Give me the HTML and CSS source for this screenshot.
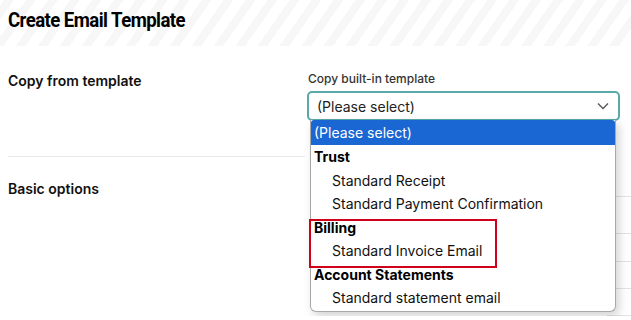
FILE: index.html
```html
<!DOCTYPE html>
<html lang="en">
<head>
	<meta charset="UTF-8">
	<title>Create Email Template</title>
	<link rel="stylesheet" href="styles.css">
</head>
<body>

<div class="page-head">
	<h1>Create Email Template</h1>
</div>

<div class="section">
	<div class="section-title">Copy from template</div>
	<div class="section-body">
		<label class="field-label" for="builtin">Copy built-in template</label>
		<div class="select-wrap">
			<div class="select" id="builtin">
				<span>(Please select)</span>
				<svg class="chev" width="12" height="8" viewBox="0 0 12 8"><path d="M1 1.5 L6 6.5 L11 1.5" fill="none" stroke="#555" stroke-width="1.3"/></svg>
			</div>
			<ul class="options">
				<li class="opt selected">(Please select)</li>
				<li class="group">Trust</li>
				<li class="opt sub">Standard Receipt</li>
				<li class="opt sub">Standard Payment Confirmation</li>
				<li class="group">Billing</li>
				<li class="opt sub">Standard Invoice Email</li>
				<li class="group">Account Statements</li>
				<li class="opt sub">Standard statement email</li>
			</ul>
			<div class="mark"></div>
		</div>
	</div>
</div>

<div class="section last">
	<div class="section-title">Basic options</div>
	<div class="section-body">
		<div class="field-line"></div>
		<div class="field-line"></div>
		<div class="field-line"></div>
		<div class="field-line"></div>
		<div class="field-line"></div>
	</div>
</div>

</body>
</html>
```
FILE: styles.css
```css
*{
	margin: 0;
	padding: 0;
	box-sizing: border-box;
}
html, body{
	overflow: hidden;
}
body{
	font-family: Inter, "Noto Sans", sans-serif;
	color: #111;
	background: #fff;
}

.page-head{
	height: 46px;
	padding: 7px 8px 0;
	background: repeating-linear-gradient(-55deg, #fff 0, #fff 10px, #f7f7f7 10px, #f7f7f7 18px);
}
.page-head h1{
	font-family: Roboto, "Liberation Sans", sans-serif;
	font-size: 20px;
	font-weight: 700;
	letter-spacing: -0.6px;
	color: #000;
	line-height: 26px;
	transform: scaleX(0.93);
	transform-origin: left center;
}

.section{
	display: grid;
	grid-template-columns: 299px 1fr;
	margin: 0 326px 0 8px;
	padding-top: 26px;
	height: 111px;
	border-bottom: 1px solid #e6e8ec;
}
.section.last{
	border-bottom: 0;
	padding-top: 23px;
	margin-right: 0;
	height: auto;
}
.section-title{
	font-size: 14px;
	font-weight: 600;
	line-height: 18px;
}
.section-body{
	width: 313px;
}

.field-label{
	display: block;
	font-size: 12px;
	font-weight: 500;
	color: #333;
	line-height: 14px;
	margin-left: 1px;
	margin-bottom: 5px;
}

.select-wrap{
	position: relative;
	width: 313px;
}
.select{
	height: 30px;
	border: 2px solid #58a9a8;
	border-radius: 5px;
	padding: 0 0 0 8px;
	display: flex;
	align-items: center;
	justify-content: space-between;
	font-size: 14px;
	color: #222;
	background: #fff;
}
.chev{
	margin-right: 9px;
}

.options{
	position: absolute;
	left: 3px;
	top: 29px;
	width: 306px;
	list-style: none;
	background: #fff;
	border: 1px solid #a8a8a8;
	border-top: 0;
	border-radius: 0 0 6px 6px;
	box-shadow: 3px 4px 10px rgba(0, 0, 0, 0.18);
	z-index: 2;
	font-size: 14px;
	line-height: 23.5px;
	padding-bottom: 1px;
}
.options li{
	height: 23.5px;
	padding-left: 3px;
	white-space: nowrap;
}
.options .selected{
	background: #1a66d3;
	color: #fff;
	height: 25px;
	line-height: 25px;
	border-radius: 3px 3px 0 0;
}
.options .group{
	font-weight: 700;
	color: #000;
}
.options .sub{
	padding-left: 21px;
	color: #111;
}

.mark{
	position: absolute;
	left: 2px;
	top: 128px;
	width: 188px;
	height: 49px;
	border: 2px solid #d0021b;
	z-index: 3;
}

.section.last .section-body{
	width: auto;
}
.field-line{
	height: 1px;
	background: #e3e3e3;
	margin-left: 300px;
}
.field-line:nth-child(1){ margin-top: 16px; }
.field-line:nth-child(2){ margin-top: 36px; }
.field-line:nth-child(3){ margin-top: 27px; }
.field-line:nth-child(4){ margin-top: 26px; }
.field-line:nth-child(5){ margin-top: 26px; }
```
